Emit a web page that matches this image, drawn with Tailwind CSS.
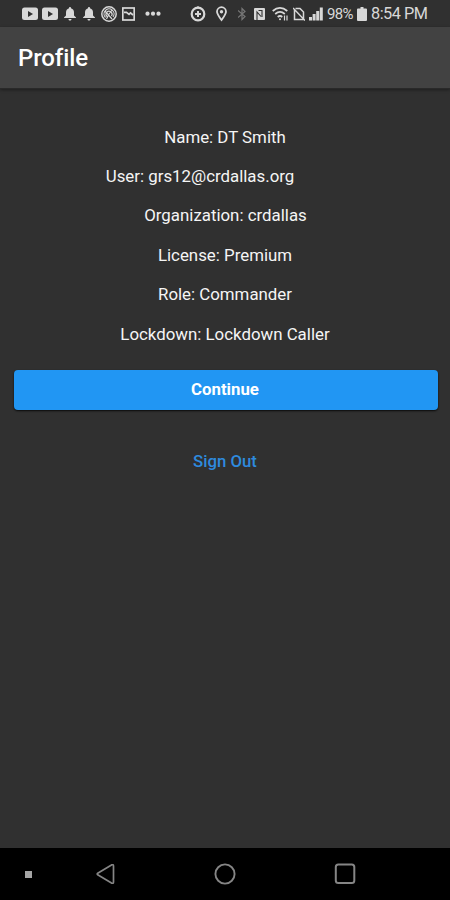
<!DOCTYPE html>
<html lang="en">
<head>
<meta charset="utf-8">
<title>Profile</title>
<script src="https://cdn.jsdelivr.net/npm/@tailwindcss/browser@4"></script>
</head>
<body class="bg-[#303030]">
<div class="flex h-[900px] w-[450px] flex-col overflow-hidden bg-[#303030] font-[Roboto,sans-serif] text-[#f5f5f5]">
  <div class="flex h-[27px] shrink-0 items-center bg-[#303030] pl-[22px] text-[#d8d8d8]">
    <svg class="h-7 w-4 shrink-0" viewBox="0 0 16 28"><rect y="7.500" width="16" height="12.500" rx="2.500" fill="currentColor"/><path d="M6 11v6l5-3z" fill="#303030"/></svg>
    <svg class="ml-1 h-7 w-4 shrink-0" viewBox="0 0 16 28"><rect y="7.500" width="16" height="12.500" rx="2.500" fill="currentColor"/><path d="M6 11v6l5-3z" fill="#303030"/></svg>
    <svg class="ml-1.5 h-7 w-3 shrink-0" viewBox="0 0 12 28" fill="currentColor"><path d="M6 7c.7 0 1 .5 1 1.200 2 .6 3 2.200 3 4.300v3l2 2v.5H0v-.5l2-2v-3c0-2.100 1-3.700 3-4.300C5 7.500 5.300 7 6 7zM4.500 19h3c0 1-.7 1.600-1.500 1.600S4.500 20 4.500 19z"/></svg>
    <svg class="ml-[7px] h-7 w-3 shrink-0" viewBox="0 0 12 28" fill="currentColor"><path d="M6 7c.7 0 1 .5 1 1.200 2 .6 3 2.200 3 4.300v3l2 2v.5H0v-.5l2-2v-3c0-2.100 1-3.700 3-4.300C5 7.500 5.300 7 6 7zM4.500 19h3c0 1-.7 1.600-1.500 1.600S4.500 20 4.500 19z"/></svg>
    <svg class="ml-[6px] h-7 w-4 shrink-0" viewBox="0 0 16 28" fill="none" stroke="currentColor" stroke-width="1.500"><circle cx="8" cy="14" r="7.200"/><path d="M4.500 17.500a5 5 0 1 1 7.500-.5M6 16.500a3 3 0 1 1 4.500-.5M4 11l7 8M8 14l-2.500 5M8 14l3-4" stroke-width="1.200"/></svg>
    <svg class="ml-[5px] h-7 w-[13px] shrink-0" viewBox="0 0 13 28" fill="none" stroke="currentColor" stroke-width="1.700"><rect x=".8" y="8" width="11.400" height="12"/><path d="M2 12.300h2.500l2.500 2 1.500-1.500L11 15" /></svg>
    <svg class="ml-[10px] h-7 w-4 shrink-0" viewBox="0 0 16 28" fill="currentColor"><circle cx="2.500" cy="13.700" r="2.100"/><circle cx="8" cy="13.700" r="2.100"/><circle cx="13.500" cy="13.700" r="2.100"/></svg>
    <svg class="ml-[29px] h-7 w-4 shrink-0" viewBox="0 0 16 28" fill="none" stroke="currentColor"><circle cx="8" cy="14" r="6.300" stroke-width="2.200"/><path d="M8 6.500v2M8 11v6M5 14h6" stroke-width="2"/></svg>
    <svg class="ml-[10px] h-7 w-[11px] shrink-0" viewBox="0 0 11 28"><path d="M5.500 20C3 16.500 1 14 1 11.700a4.500 4.500 0 0 1 9 0C10 14 8 16.500 5.500 20z" fill="none" stroke="currentColor" stroke-width="1.800"/><circle cx="5.500" cy="11.700" r="1.700" fill="currentColor"/></svg>
    <svg class="ml-[11px] h-7 w-2 shrink-0 text-[#777]" viewBox="0 0 8 28" fill="none" stroke="currentColor" stroke-width="1.200"><path d="M0 10.500l7 6-3 3v-11l3 3-7 6"/></svg>
    <svg class="ml-2 h-7 w-[11px] shrink-0" viewBox="0 0 11 28"><rect y="8" width="11" height="12" rx="1" fill="currentColor"/><path d="M3 20v-8l4 4.500M4.500 10.500H8V17" fill="none" stroke="#303030" stroke-width="1.100"/></svg>
    <svg class="ml-[7px] h-7 w-4 shrink-0" viewBox="0 0 16 28" fill="none" stroke="currentColor" stroke-width="1.700"><path d="M.7 11c4.500-4 10-4 14.600 0M3.200 14c3-2.600 6.600-2.600 9.600 0M5.700 17c1.500-1.300 3.100-1.300 4.600 0"/><circle cx="8" cy="19.300" r="1" fill="currentColor" stroke="none"/><path d="M12.500 15.500v5M15 15.500v5" stroke-width="1.200"/></svg>
    <svg class="ml-[5px] h-7 w-3 shrink-0" viewBox="0 0 12 28" fill="none" stroke="currentColor" stroke-width="1.500"><path d="M1.500 10v9.500h9V12L7 8.500H2.500M0 8l12 12.500"/></svg>
    <svg class="ml-1 h-7 w-[14px] shrink-0" viewBox="0 0 14 28" fill="currentColor"><path d="M0 17h3v3.500H0zM3.600 14h3v6.500h-3zM7.200 11h3v9.500h-3zM10.800 7.500h3v13h-3z"/></svg>
    <span class="ml-[4px] mt-[1px] w-[30px] whitespace-nowrap text-[15px] leading-[20px] tracking-[-0.700px]">98%</span>
    <svg class="h-7 w-[10px] shrink-0" viewBox="0 0 10 28" fill="currentColor"><path d="M3.500 7h3v1.500H9q1 0 1 1V20q0 1-1 1H1q-1 0-1-1V9.500q0-1 1-1h2.500z"/></svg>
    <span class="ml-[4px] mt-[1px] whitespace-nowrap text-[16.300px] leading-[20px] tracking-[-0.500px]">8:54 PM</span>
  </div>
  <header class="flex h-[62px] shrink-0 items-center border-b border-[#292929] bg-[#424242] pl-[18px] shadow-[0_1px_3px_rgba(0,0,0,0.4)]">
    <h1 class="text-[24px] font-medium leading-[28px] tracking-[-0.100px] text-white">Profile</h1>
  </header>
  <main class="flex grow flex-col items-center pt-[28.500px]">
    <div class="flex w-full flex-col items-center text-[16.850px] leading-[39.400px]">
      <p>Name: DT Smith</p>
      <p class="mr-[50px]">User: grs12@crdallas.org</p>
      <p class="mr-[-1px]">Organization: crdallas</p>
      <p>License: Premium</p>
      <p>Role: Commander</p>
      <p>Lockdown: Lockdown Caller</p>
    </div>
    <button class="mt-[16px] h-[40px] w-[424px] translate-x-[1px] rounded-[4px] bg-[#2196f3] text-[16.800px] font-bold text-white shadow-[0_1px_2px_rgba(0,0,0,0.8)]"><span class="relative -left-[1px]">Continue</span></button>
    <button class="mt-[32px] h-[40px] text-[16.800px] font-medium text-[#2e8ade]">Sign Out</button>
  </main>
  <nav class="flex h-[52px] shrink-0 items-center bg-black pl-[25px] text-[#858585]">
    <span class="size-[7px] bg-[#a5a5a5]"></span>
    <svg class="ml-[64px] size-5" viewBox="0 0 20 20" fill="none" stroke="currentColor" stroke-width="1.700" stroke-linejoin="round"><path d="M1.700 9.200L15.500.9q2-.9 2 1.100v16q0 2-2 1.100L1.700 10.800q-1-.8 0-1.600z"/></svg>
    <svg class="ml-[98px] size-[22px]" viewBox="0 0 22 22" fill="none" stroke="currentColor" stroke-width="1.900"><circle cx="11" cy="11" r="9.600"/></svg>
    <svg class="ml-[98px] size-[22px]" viewBox="0 0 22 22" fill="none" stroke="currentColor" stroke-width="2"><rect x="1.800" y="1.500" width="18.500" height="18.500" rx="2.500"/></svg>
  </nav>
</div>
</body>
</html>
